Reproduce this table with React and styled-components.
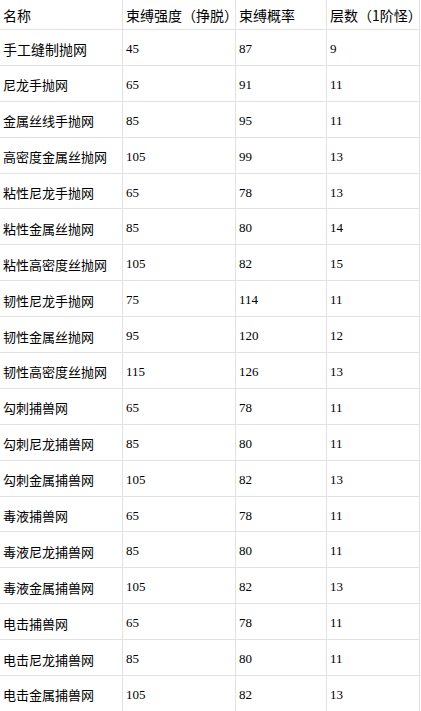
import React from 'react';
import styled, {createGlobalStyle} from 'styled-components';

const GlobalStyle = createGlobalStyle`
  html, body {
    margin: 0;
    padding: 0;
    background: #fff;
  }
`;

const rows = [
  ['手工缝制抛网', 45, 87, 9],
  ['尼龙手抛网', 65, 91, 11],
  ['金属丝线手抛网', 85, 95, 11],
  ['高密度金属丝抛网', 105, 99, 13],
  ['粘性尼龙手抛网', 65, 78, 13],
  ['粘性金属丝抛网', 85, 80, 14],
  ['粘性高密度丝抛网', 105, 82, 15],
  ['韧性尼龙手抛网', 75, 114, 11],
  ['韧性金属丝抛网', 95, 120, 12],
  ['韧性高密度丝抛网', 115, 126, 13],
  ['勾刺捕兽网', 65, 78, 11],
  ['勾刺尼龙捕兽网', 85, 80, 11],
  ['勾刺金属捕兽网', 105, 82, 13],
  ['毒液捕兽网', 65, 78, 11],
  ['毒液尼龙捕兽网', 85, 80, 11],
  ['毒液金属捕兽网', 105, 82, 13],
  ['电击捕兽网', 65, 78, 11],
  ['电击尼龙捕兽网', 85, 80, 11],
  ['电击金属捕兽网', 105, 82, 13],
];

const Table = styled.div`
  display: grid;
  grid-template-columns: 123px 113px 91px 93px;
  width: 420px;
  color: #000;
`;

const Cell = styled.div`
  box-sizing: border-box;
  height: ${p => (p.$head ? '30px' : '35.9px')};
  border-right: 1px solid #e2e2e2;
  border-bottom: 1px solid #e2e2e2;
  padding-left: 3px;
  display: flex;
  align-items: center;
  padding-top: ${p => (p.$head ? '0' : '3px')};
  white-space: nowrap;
  overflow: visible;
  font-family: ${p => (p.$num
    ? '"Liberation Serif", "Noto Sans CJK SC", serif'
    : '"Noto Sans CJK SC", "Noto Sans", sans-serif')};
  font-size: ${p => (p.$num ? '13px' : p.$big ? '14px' : '13px')};
`;

export default function App() {
  return (
    <>
      <GlobalStyle />
      <Table>
        <Cell $head $big>名称</Cell>
        <Cell $head $big>束缚强度（挣脱）</Cell>
        <Cell $head $big>束缚概率</Cell>
        <Cell $head $big>层数（1阶怪）</Cell>
        {rows.map((r, i) => (
          <React.Fragment key={r[0]}>
            <Cell $big={i === 0}>{r[0]}</Cell>
            <Cell $num>{r[1]}</Cell>
            <Cell $num>{r[2]}</Cell>
            <Cell $num>{r[3]}</Cell>
          </React.Fragment>
        ))}
      </Table>
    </>
  );
}
